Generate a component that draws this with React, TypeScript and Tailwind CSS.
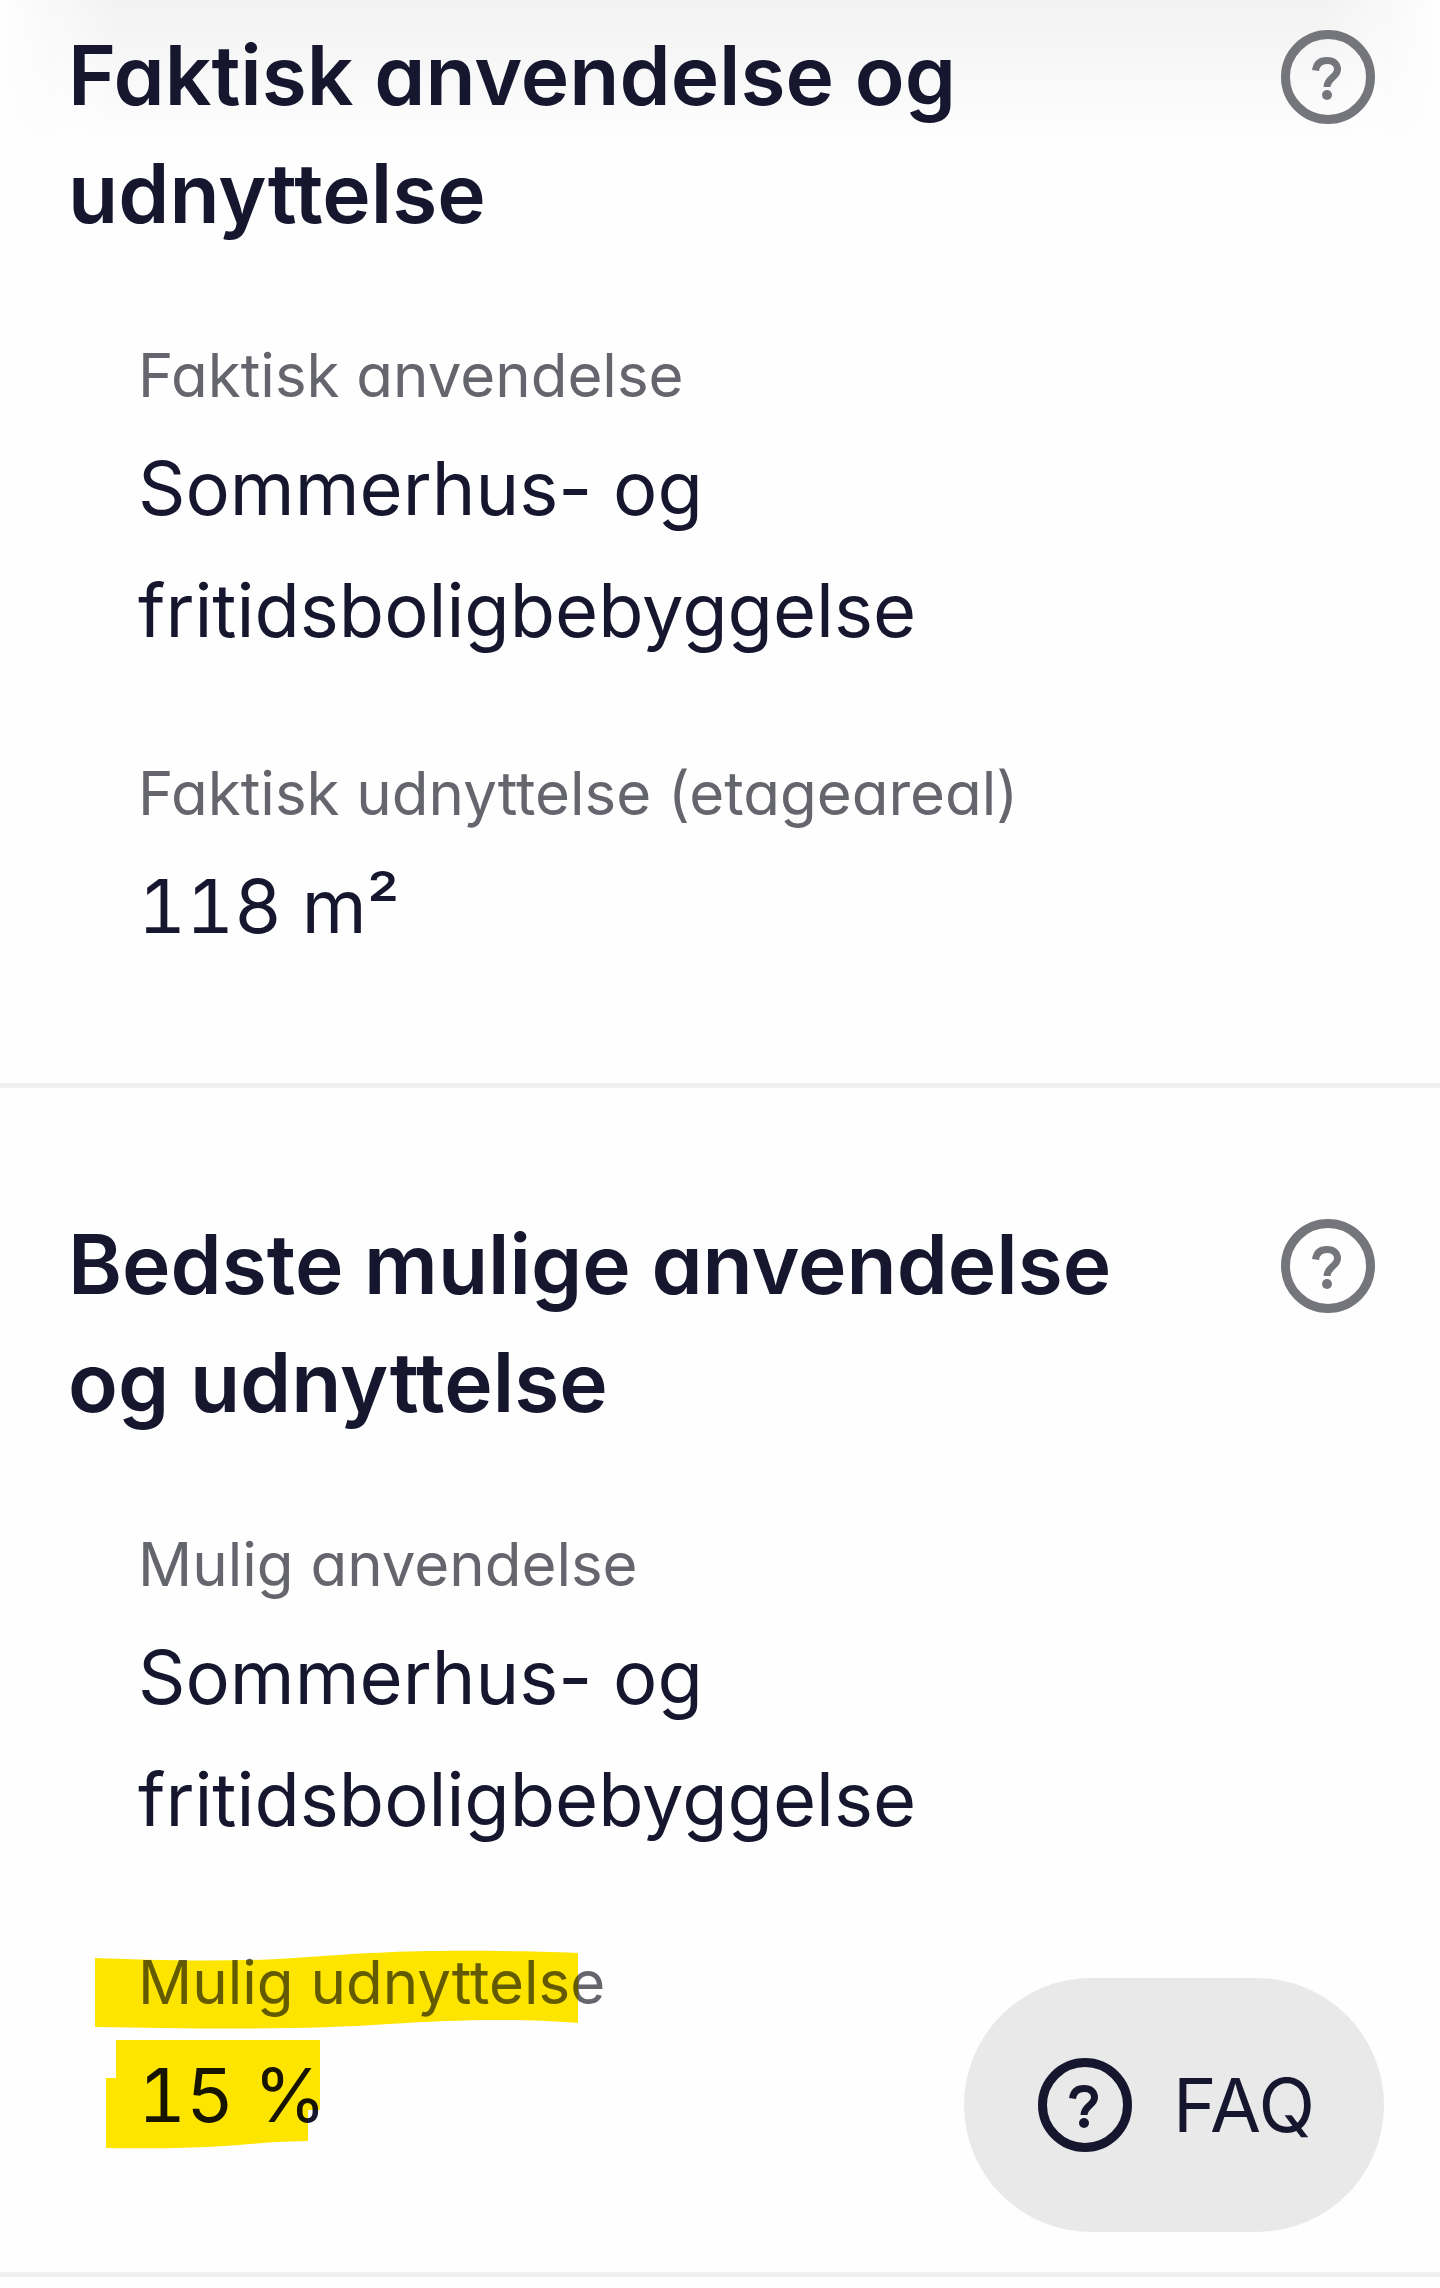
import React from 'react';

type Fact = {
  label: string;
  value: string;
  numeric?: boolean;
  marked?: boolean;
};

const currentUse: Fact[] = [
  { label: 'Faktisk anvendelse', value: 'Sommerhus- og fritidsboligbebyggelse' },
  { label: 'Faktisk udnyttelse (etageareal)', value: '118 m²', numeric: true },
];

const bestUse: Fact[] = [
  { label: 'Mulig anvendelse', value: 'Sommerhus- og fritidsboligbebyggelse' },
  { label: 'Mulig udnyttelse', value: '15 %', numeric: true, marked: true },
];

const HelpIcon: React.FC = () => (
  <svg viewBox="0 0 96 96" className="size-24 shrink-0" fill="none" aria-hidden="true">
    <circle cx="48" cy="48" r="42.5" stroke="currentColor" strokeWidth="9" />
    <path
      d="M35.5 41.5C36.5 34.5 41 31.5 47 31.5C53.5 31.5 57.5 35 57.5 40.5C57.5 48 47 49 47 58"
      stroke="currentColor"
      strokeWidth="7"
    />
    <circle cx="47" cy="66" r="5" fill="currentColor" />
  </svg>
);

// Two marker strokes, one over the label and one over the value
const Marker: React.FC = () => (
  <svg
    viewBox="0 0 500 210"
    className="absolute -left-[50px] top-0 h-[210px] w-[500px] mix-blend-multiply pointer-events-none"
    fill="#fee600"
    aria-hidden="true"
  >
    <path d="M7 16C60 18 150 21 220 15C290 10 350 6 490 11V81C420 76 370 78 300 82C220 88 110 87 7 85Z" />
    <path d="M28 98H232V168H220V199C150 200 150 208 18 206V136H28Z" />
  </svg>
);

const Section: React.FC<{ title: string; facts: Fact[]; className: string }> = ({ title, facts, className }) => (
  <section className={`border-b-[5px] border-[#f0f0f0] pb-[116px] ${className}`}>
    <div className="flex items-start justify-between gap-16 pl-[68px] pr-16">
      <h2 className="max-w-[1100px] text-[82px] leading-[118px] font-semibold">{title}</h2>
      <button type="button" aria-label="Hjælp" className="mt-3 text-[#75767c]">
        <HelpIcon />
      </button>
    </div>
    <dl className="mt-[82px] space-y-[82px] px-[138px]">
      {facts.map((fact) => (
        <div key={fact.label} className="relative">
          <dt className="text-[60px] leading-[80px] text-[#64656d]">{fact.label}</dt>
          <dd className={`mt-3 max-w-[850px] text-[74px] leading-[122px] ${fact.numeric ? 'tabular-nums' : ''}`}>
            {fact.value}
          </dd>
          {fact.marked && <Marker />}
        </div>
      ))}
    </dl>
  </section>
);

const App: React.FC = () => {
  return (
    <main className="relative min-h-screen bg-[#fefefe] font-['Inter',sans-serif] [font-feature-settings:'cv11'] text-[#17162f]">
      {/* Shade from the bar above */}
      <div className="absolute inset-x-0 top-0 h-36 bg-linear-to-b from-[#f2f2f2] to-[#fefefe] [mask-image:linear-gradient(to_right,transparent,black_8%,black_92%,transparent)]" />
      <div className="relative">
        <Section title="Faktisk anvendelse og udnyttelse" facts={currentUse} className="pt-[17px]" />
        <Section title="Bedste mulige anvendelse og udnyttelse" facts={bestUse} className="pt-[118px]" />
      </div>
      <button
        type="button"
        className="fixed right-14 bottom-14 flex h-[254px] w-[420px] items-center justify-center gap-10 rounded-full bg-[#e9e9e9] pl-1 text-[74px]"
      >
        <HelpIcon />
        FAQ
      </button>
    </main>
  );
};

export default App;
